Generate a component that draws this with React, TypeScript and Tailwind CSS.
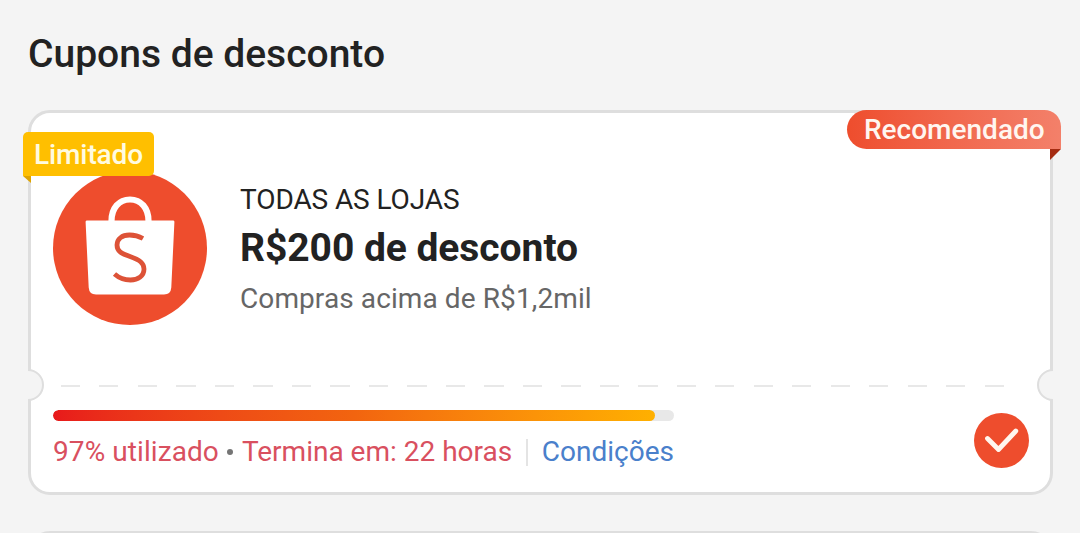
interface Coupon {
  store: string
  title: string
  minimum: string
  used: number
  endsIn: string
}

const coupon: Coupon = {
  store: 'TODAS AS LOJAS',
  title: 'R$200 de desconto',
  minimum: 'Compras acima de R$1,2mil',
  used: 97,
  endsIn: '22 horas',
}

function StoreLogo() {
  return (
    <svg viewBox="0 0 154 154" className="h-[154px] w-[154px] shrink-0">
      <circle cx="77" cy="77" r="77" fill="#ee4d2d" />
      <path
        d="M58.5 50 C58.5 37 66 28.5 77 28.5 C88 28.5 95.5 37 95.5 50"
        fill="none"
        stroke="#fff"
        strokeWidth="6.2"
      />
      <path
        d="M34 49.5 H120 Q121.5 49.5 121.4 51 L118.3 116.5 Q117.8 123.5 111 123.5 H43 Q36.2 123.5 35.7 116.5 L32.6 51 Q32.5 49.5 34 49.5 Z"
        fill="#fff"
      />
      <path
        d="M90 67.5 C85.5 65 81 64 76.5 64 C69 64 64 68 64 74 C64 80 68 82.5 77 85.5 C86.5 88.8 91 92 91 98 C91 105 85 109 77.5 109 C71 109 66 107 61.5 103"
        fill="none"
        stroke="#dd5237"
        strokeWidth="4.8"
      />
    </svg>
  )
}

function LimitedTag() {
  return (
    <div className="absolute top-[19px] -left-2">
      <div className="flex h-11 w-[131px] items-center rounded-[5px] rounded-bl-none bg-[#ffbf00] pt-[2px] pl-[11px] text-[28px] font-medium tracking-[-0.1px] text-[#fffbe0]">
        Limitado
      </div>
      <div className="h-[7px] w-2 bg-[#dfa400] [clip-path:polygon(0_0,100%_0,100%_100%)]" />
    </div>
  )
}

function RecommendedTag() {
  return (
    <div className="absolute -top-[3px] -right-[11px] flex flex-col items-end">
      <div className="flex h-[39px] w-[214px] items-center rounded-l-[20px] rounded-tr-[17px] bg-linear-to-r from-[#ee4d2d] to-[#f3806a] pt-px pl-[17px] text-[28px] font-medium text-[#fff6f0]">
        Recomendado
      </div>
      <div className="h-[11px] w-[11px] bg-[#a52c12] [clip-path:polygon(0_0,100%_0,0_100%)]" />
    </div>
  )
}

function Notch({ side }: { side: 'left' | 'right' }) {
  return (
    <div
      className={`absolute top-[256px] h-8 w-4 overflow-hidden ${side === 'left' ? '-left-[3px]' : '-right-[3px]'}`}
    >
      <div
        className={`h-8 w-8 rounded-full border-[2.5px] border-[#dedede] bg-[#f4f4f4] ${side === 'left' ? '-ml-4' : ''}`}
      />
    </div>
  )
}

function CouponCard({ store, title, minimum, used, endsIn }: Coupon) {
  return (
    <div className="relative mx-7 h-[385px] w-[1025px] rounded-[22px] border-3 border-[#dedede] bg-white px-[22px]">
      <div className="flex h-[272px] gap-[33px] pt-[58px]">
        <StoreLogo />
        <div className="pt-[5px] whitespace-nowrap">
          <div className="text-[28px] leading-12 tracking-[-0.1px] text-[#222]">{store}</div>
          <div className="text-[39px] leading-12 font-bold tracking-[-0.05px] text-[#222]">{title}</div>
          <div className="text-[28px] leading-[54px] tracking-[0.1px] text-[#666]">{minimum}</div>
        </div>
      </div>
      <div className="ml-2 h-[2px] w-[943px] bg-[repeating-linear-gradient(90deg,#e8e8e8_0_19px,transparent_19px_38.5px)]" />

      <div className="flex justify-between pt-[23px]">
        <div className="w-[621px]">
          <div className="h-[11px] overflow-hidden rounded-full bg-[#e8e8e8]">
            <div
              className="h-full rounded-full bg-linear-to-r from-[#e8191b] via-[#f2640f] to-[#ffb000]"
              style={{ width: `${used}%` }}
            />
          </div>
          <div className="mt-[11px] flex h-10 items-center text-[28px] whitespace-nowrap text-[#d9505f]">
            <span className="tracking-[0.08px]">{used}% utilizado</span>
            <span className="mr-[9px] ml-2 h-[6px] w-[6px] rounded-full bg-[#757575]" />
            <span>Termina em: {endsIn}</span>
            <span className="mr-[14px] ml-auto h-[27px] w-[2px] bg-[#e4e4e4]" />
            <a href="#" className="text-[#4a80cb]">Condições</a>
          </div>
        </div>
        <svg viewBox="0 0 55 55" className="mt-[3px] mr-[-1px] h-[55px] w-[55px]">
          <circle cx="27.5" cy="27.5" r="27.5" fill="#ee4d2d" />
          <path d="M13.5 25.5 L24.5 36.5 L41.8 18" fill="none" stroke="#fff6ee" strokeWidth="4.8" strokeLinecap="round" strokeLinejoin="round" />
        </svg>
      </div>

      <Notch side="left" />
      <Notch side="right" />
      <LimitedTag />
      <RecommendedTag />
    </div>
  )
}

export default function App() {
  return (
    <div className="h-[533px] w-[1080px] overflow-hidden bg-[#f4f4f4] font-[Roboto,sans-serif]">
      <h1 className="flex h-[110px] items-start pt-[30px] pl-7 text-[39px] leading-12 font-medium text-[#222]">
        Cupons de desconto
      </h1>
      <CouponCard {...coupon} />
      <div className="mx-7 mt-9 h-[385px] w-[1025px] rounded-[22px] border-3 border-[#dedede] bg-white" />
    </div>
  )
}
